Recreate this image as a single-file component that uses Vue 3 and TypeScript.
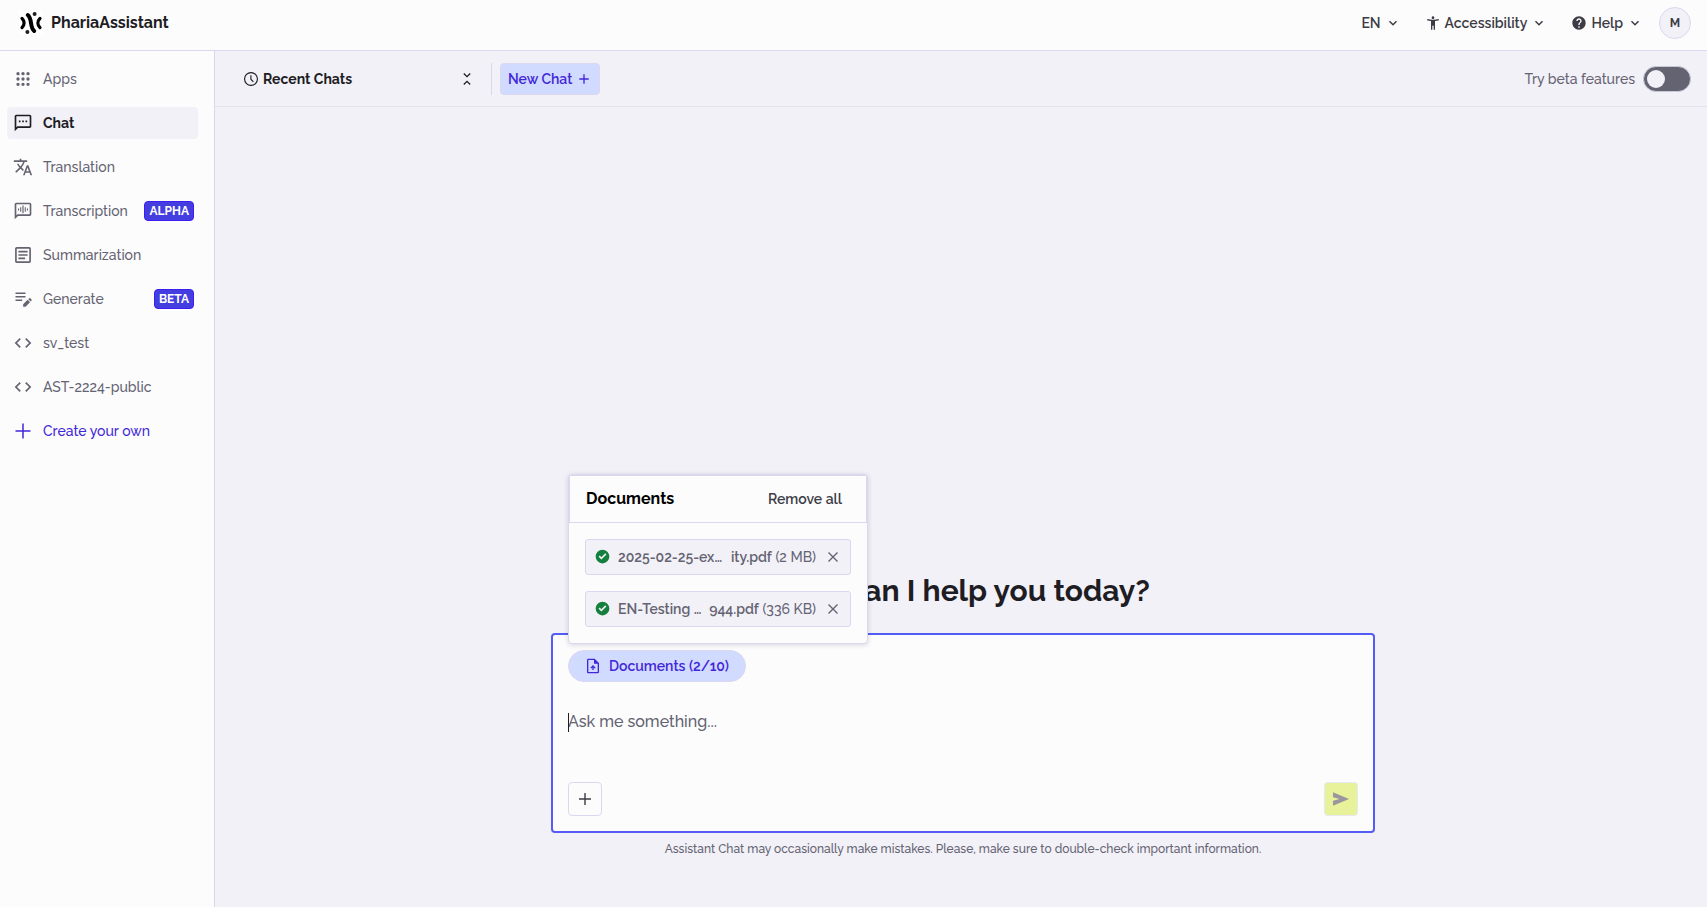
<script setup lang="ts">
import { ref } from 'vue'

interface NavItem {
  label: string
  icon: string
  badge?: string
  active?: boolean
  accent?: boolean
}

interface DocumentFile {
  head: string
  tail: string
  size: string
}

const icons: Record<string, string> = {
  apps: 'M6 3.6a2 2 0 1 0 0 4 2 2 0 0 0 0-4zm6 0a2 2 0 1 0 0 4 2 2 0 0 0 0-4zm6 0a2 2 0 1 0 0 4 2 2 0 0 0 0-4zM6 10a2 2 0 1 0 0 4 2 2 0 0 0 0-4zm6 0a2 2 0 1 0 0 4 2 2 0 0 0 0-4zm6 0a2 2 0 1 0 0 4 2 2 0 0 0 0-4zM6 16.4a2 2 0 1 0 0 4 2 2 0 0 0 0-4zm6 0a2 2 0 1 0 0 4 2 2 0 0 0 0-4zm6 0a2 2 0 1 0 0 4 2 2 0 0 0 0-4z',
  chat: 'M20 2H4c-1.1 0-2 .9-2 2v18l4-4h14c1.1 0 2-.9 2-2V4c0-1.1-.9-2-2-2zm0 14H5.2L4 17.2V4h16v12zM7 9h2v2H7zm4 0h2v2h-2zm4 0h2v2h-2z',
  translate: 'M12.87 15.07l-2.54-2.51.03-.03c1.74-1.94 2.98-4.17 3.71-6.53H17V4h-7V2H8v2H1v1.99h11.17C11.5 7.92 10.44 9.75 9 11.35 8.07 10.32 7.3 9.19 6.69 8h-2c.73 1.63 1.73 3.17 2.98 4.56l-5.09 5.02L4 19l5-5 3.11 3.11.76-2.04zM18.5 10h-2L12 22h2l1.12-3h4.75L21 22h2l-4.5-12zm-2.62 7l1.62-4.33L19.12 17h-3.24z',
  transcribe: 'M20 2H4c-1.1 0-2 .9-2 2v18l4-4h14c1.1 0 2-.9 2-2V4c0-1.1-.9-2-2-2zm0 14H5.2L4 17.2V4h16v12zM6 9h1.3v2.4H6zm2.6-1.6h1.3V13H8.6zM11.3 5.5h1.4v9.2h-1.4zM14.1 7.4h1.3V13h-1.3zM16.7 9H18v2.4h-1.3z',
  summary: 'M19.5 2.5h-15c-1.1 0-2 .9-2 2v15c0 1.1.9 2 2 2h15c1.1 0 2-.9 2-2v-15c0-1.1-.9-2-2-2zm0 17h-15v-15h15v15zM6.5 7h11v2h-11zm0 4h11v2h-11zm0 4h8v2h-8z',
  generate: 'M3 8.3h12v2H3zm0-4.2h12v2H3zm0 8.400h8v2H3zM18.400 12.200l.7-.7c.6-.6 1.500-.6 2.100 0l.7.7c.6.6.6 1.500 0 2.100l-.7.7-2.800-2.800zm-.8.800l-5.400 5.400v2.800h2.800l5.400-5.400-2.800-2.800z',
  code: 'M9.4 16.6L4.8 12l4.6-4.6L8 6l-6 6 6 6 1.4-1.4zm5.2 0l4.6-4.6-4.6-4.6L16 6l6 6-6 6-1.4-1.4z',
  add: 'M21 12.9h-8.1V21h-1.8v-8.1H3v-1.8h8.1V3h1.8v8.1H21z',
}

const navItems: NavItem[] = [
  { label: 'Apps', icon: 'apps' },
  { label: 'Chat', icon: 'chat', active: true },
  { label: 'Translation', icon: 'translate' },
  { label: 'Transcription', icon: 'transcribe', badge: 'ALPHA' },
  { label: 'Summarization', icon: 'summary' },
  { label: 'Generate', icon: 'generate', badge: 'BETA' },
  { label: 'sv_test', icon: 'code' },
  { label: 'AST-2224-public', icon: 'code' },
  { label: 'Create your own', icon: 'add', accent: true },
]

const files = ref<DocumentFile[]>([
  { head: '2025-02-25-ex…', tail: 'ity.pdf', size: '(2 MB)' },
  { head: 'EN-Testing …', tail: '944.pdf', size: '(336 KB)' },
])

const beta = ref(false)
const message = ref('')

function removeFile(index: number): void {
  files.value.splice(index, 1)
}
</script>

<template>
  <div class="app">
    <header class="topbar">
      <a class="brand" href="#">
        <svg class="logo" viewBox="0 0 24 24" aria-hidden="true">
          <g fill="none" stroke="#000" stroke-linecap="round" stroke-width="3.2">
            <path d="M3 7.400C5.800 10.200 5.800 13.800 3 16.600" />
            <path d="M21 7.400C18.200 10.200 18.200 13.800 21 16.600" />
            <path d="M8.800 4C13.600 8 10.400 16 15.200 20" stroke-width="4" />
          </g>
          <circle cx="15.600" cy="3" r="2" />
          <circle cx="8.400" cy="21" r="2" />
        </svg>
        <span>PhariaAssistant</span>
      </a>
      <div class="top-actions">
        <button class="menu-button" type="button">
          EN
          <svg class="chevron" viewBox="0 0 16 16" aria-hidden="true"><path d="M4.500 6.300 8 9.800l3.500-3.500" /></svg>
        </button>
        <button class="menu-button" type="button">
          <svg class="icon-sm" viewBox="0 0 24 24" aria-hidden="true"><path d="M20.500 6c-2.610.7-5.670 1-8.500 1s-5.890-.3-8.500-1L3 8c1.860.5 4 .83 6 1v13h2v-6h2v6h2V9c2-.17 4.140-.5 6-1l-.5-2zM12 6c1.100 0 2-.9 2-2s-.9-2-2-2-2 .9-2 2 .9 2 2 2z" /></svg>
          Accessibility
          <svg class="chevron" viewBox="0 0 16 16" aria-hidden="true"><path d="M4.500 6.300 8 9.800l3.500-3.500" /></svg>
        </button>
        <button class="menu-button" type="button">
          <svg class="icon-sm" viewBox="0 0 24 24" aria-hidden="true"><path d="M12 2C6.480 2 2 6.480 2 12s4.480 10 10 10 10-4.480 10-10S17.520 2 12 2zm1 17h-2v-2h2v2zm2.070-7.750l-.9.920C13.450 12.900 13 13.500 13 15h-2v-.5c0-1.100.450-2.100 1.170-2.830l1.240-1.260c.370-.360.590-.860.590-1.410 0-1.100-.9-2-2-2s-2 .9-2 2H8c0-2.210 1.790-4 4-4s4 1.790 4 4c0 .880-.360 1.680-.930 2.250z" /></svg>
          Help
          <svg class="chevron" viewBox="0 0 16 16" aria-hidden="true"><path d="M4.500 6.300 8 9.800l3.500-3.500" /></svg>
        </button>
        <button class="avatar" type="button">M</button>
      </div>
    </header>

    <div class="body">
      <nav class="sidebar">
        <a
          v-for="item in navItems"
          :key="item.label"
          href="#"
          class="nav-item"
          :class="{ active: item.active, accent: item.accent }"
        >
          <svg class="icon-md" viewBox="0 0 24 24" aria-hidden="true"><path :d="icons[item.icon]" /></svg>
          <span>{{ item.label }}</span>
          <span v-if="item.badge" class="badge">{{ item.badge }}</span>
        </a>
      </nav>

      <main class="main">
        <div class="toolbar">
          <button class="recent" type="button">
            <svg class="icon-sm" viewBox="0 0 24 24" aria-hidden="true"><path d="M12 1.500a10.500 10.500 0 1 0 0 21 10.500 10.500 0 0 0 0-21zm0 19.300a8.800 8.800 0 1 1 0-17.600 8.800 8.800 0 0 1 0 17.600zM12.700 6.500H11v6.300l4 4 1.200-1.200-3.500-3.500z" /></svg>
            <span>Recent Chats</span>
            <svg class="fold" viewBox="0 0 24 24" aria-hidden="true"><path d="M6.500 19.600 7.800 21 12 16.800l4.200 4.200 1.300-1.400L12 14.100zM17.500 4.400 16.200 3 12 7.200 7.800 3 6.500 4.400 12 9.900z" /></svg>
          </button>
          <span class="divider"></span>
          <button class="new-chat" type="button">
            New Chat
            <svg class="icon-sm" viewBox="0 0 24 24" aria-hidden="true"><path d="M19 13h-6v6h-2v-6H5v-2h6V5h2v6h6z" /></svg>
          </button>
          <label class="beta">
            Try beta features
            <input v-model="beta" type="checkbox" role="switch" class="switch" />
          </label>
        </div>

        <section class="stage">
          <h1>How can I help you today?</h1>
          <form class="composer" @submit.prevent>
            <div class="popover">
              <div class="popover-head">
                <h2>Documents</h2>
                <button type="button" class="remove-all" @click="files = []">Remove all</button>
              </div>
              <ul class="files">
                <li v-for="(file, index) in files" :key="file.tail" class="file">
                  <svg class="check" viewBox="0 0 24 24" aria-hidden="true"><path d="M12 1a11 11 0 1 0 0 22 11 11 0 0 0 0-22zm-1.800 15.800-4.500-4.500 1.900-1.900 2.600 2.600 6.200-6.200 1.900 1.900z" /></svg>
                  <span class="name">{{ file.head }}</span>
                  <span class="tail"><b>{{ file.tail }}</b> {{ file.size }}</span>
                  <button type="button" class="close" aria-label="Remove document" @click="removeFile(index)">
                    <svg viewBox="0 0 16 16" aria-hidden="true"><path d="m3.500 3.500 9 9m0-9-9 9" /></svg>
                  </button>
                </li>
              </ul>
            </div>
            <button type="button" class="pill">
              <svg class="icon-sm" viewBox="0 0 24 24" aria-hidden="true"><path d="M14.500 1H5c-1.100 0-2 .9-2 2v18c0 1.100.9 2 2 2h14c1.100 0 2-.9 2-2V7.500zM19 21H5V3h8.500v5.500H19zM8 14.500l1.400 1.400 1.600-1.600V18h2v-3.700l1.600 1.600 1.400-1.400-4-4z" /></svg>
              Documents (2/10)
            </button>
            <div class="prompt">
              <textarea v-model="message" rows="2" aria-label="Message" placeholder="Ask me something..."></textarea>
            </div>
            <div class="composer-actions">
              <button type="button" class="square" aria-label="Add">
                <svg viewBox="0 0 16 16" aria-hidden="true"><path d="M8 2v12M2 8h12" /></svg>
              </button>
              <button type="submit" class="square send" aria-label="Send">
                <svg viewBox="0 0 16 16" aria-hidden="true"><path d="M0 1.200 16 8 0 14.800V9.800L6.500 8 0 6.200z" /></svg>
              </button>
            </div>
          </form>
          <p class="note">Assistant Chat may occasionally make mistakes. Please, make sure to double-check important information.</p>
        </section>
      </main>
    </div>
  </div>
</template>

<style>
body {
  margin: 0;
}
</style>

<style scoped>
.app {
  display: flex;
  flex-direction: column;
  min-height: 100vh;
  background: #f2f1f8;
  color: #1e1d24;
  font-family: Raleway, "Open Sans", sans-serif;
  font-size: 14px;
  font-weight: 500;
  line-height: 20px;
}

.app * {
  box-sizing: border-box;
}

button {
  margin: 0;
  padding: 0;
  border: 0;
  background: none;
  color: inherit;
  font: inherit;
  cursor: pointer;
}

a {
  color: inherit;
  text-decoration: none;
}

svg {
  flex: none;
  fill: currentColor;
}

.icon-sm {
  width: 16px;
  height: 16px;
}

.icon-md {
  width: 20px;
  height: 20px;
}

.topbar {
  display: flex;
  align-items: center;
  justify-content: space-between;
  height: 51px;
  padding: 0 16px 4px 19px;
  border-bottom: 1px solid #dad8ee;
  background: #fcfcfd;
}

.brand {
  display: flex;
  align-items: center;
  gap: 8px;
  font-size: 16px;
  font-weight: 700;
}

.logo {
  width: 24px;
  height: 24px;
  background: #fff;
}

.top-actions {
  display: flex;
  align-items: center;
  gap: 24px;
  color: #3d3c46;
  font-weight: 600;
}

.menu-button {
  display: flex;
  align-items: center;
  gap: 4px;
}

.chevron {
  width: 16px;
  height: 16px;
}

.chevron path {
  fill: none;
  stroke: currentColor;
  stroke-width: 1.5;
}

.avatar {
  width: 32px;
  height: 32px;
  margin-left: -8px;
  border: 1px solid #dad8ee;
  border-radius: 50%;
  background: #f2f1f8;
  font-size: 12px;
  font-weight: 700;
}

.body {
  display: flex;
  flex: 1;
}

.sidebar {
  display: flex;
  flex: none;
  flex-direction: column;
  gap: 12px;
  width: 215px;
  padding: 12px 16px 12px 7px;
  border-right: 1px solid #dad8ee;
  background: #fcfcfd;
}

.nav-item {
  display: flex;
  align-items: center;
  gap: 10px;
  height: 32px;
  padding: 0 4px 0 6px;
  border-radius: 4px;
  color: #646371;
}

.nav-item.active {
  background: #f2f1f8;
  color: #1e1d24;
  font-weight: 700;
}

.nav-item.accent {
  color: #4227d9;
}

.badge {
  height: 20px;
  margin-left: auto;
  padding: 0 4px;
  border: 1px solid #3c1ff0;
  border-radius: 4px;
  background: #443ddf;
  color: #fff;
  font-size: 12px;
  font-weight: 700;
  line-height: 18px;
}

.main {
  display: flex;
  flex: 1;
  flex-direction: column;
  min-width: 0;
}

.toolbar {
  display: flex;
  align-items: center;
  height: 56px;
  padding: 0 16px 0 28px;
  border-bottom: 1px solid #e3e2ea;
}

.recent {
  display: flex;
  align-items: center;
  gap: 4px;
  width: 232px;
  font-weight: 700;
}

.fold {
  width: 16px;
  height: 16px;
  margin-left: auto;
}

.divider {
  width: 1px;
  height: 32px;
  margin: 0 8px 0 16px;
  background: #dad8ee;
}

.new-chat {
  display: flex;
  align-items: center;
  gap: 4px;
  height: 32px;
  padding: 0 7px;
  border: 1px solid #dad8ee;
  border-radius: 4px;
  background: #d1daff;
  color: #4227d9;
  font-weight: 600;
}

.beta {
  display: flex;
  align-items: center;
  gap: 8px;
  margin-left: auto;
  color: #646371;
}

.switch {
  display: flex;
  align-items: center;
  width: 48px;
  height: 26px;
  margin: 0;
  padding: 0 3px;
  border: 1px solid #c9c8d8;
  border-radius: 13px;
  background: #646371;
  appearance: none;
}

.switch::before {
  width: 18px;
  height: 18px;
  border-radius: 50%;
  background: #f2f1f8;
  content: "";
}

.switch:checked {
  justify-content: flex-end;
}

.stage {
  display: flex;
  flex: 1;
  flex-direction: column;
  align-items: center;
  justify-content: flex-end;
  padding: 0 16px 48px 20px;
}

h1 {
  margin: 0 0 24px;
  font-size: 30px;
  font-weight: 700;
  line-height: 36px;
}

.composer {
  position: relative;
  width: 100%;
  max-width: 824px;
  padding: 15px;
  border: 2px solid #535cf5;
  border-radius: 4px;
  background: #fcfcfd;
}

.popover {
  position: absolute;
  bottom: 187px;
  left: 15px;
  width: 300px;
  border: 1px solid #dad8ee;
  border-radius: 4px;
  background: #fcfcfd;
  box-shadow: 0 1px 5px rgb(60 55 100 / 20%);
}

.popover-head {
  display: flex;
  align-items: center;
  justify-content: space-between;
  height: 48px;
  padding: 0 24px 0 16px;
  border: 1px solid #dad8ee;
}

h2 {
  margin: 0;
  color: #000;
  font-size: 16px;
  font-weight: 700;
}

.remove-all {
  color: #3d3c46;
  font-weight: 600;
}

.files {
  display: flex;
  flex-direction: column;
  gap: 16px;
  margin: 0;
  padding: 16px;
  list-style: none;
}

.file {
  display: flex;
  align-items: center;
  height: 36px;
  padding: 0 9px 1px;
  border: 1px solid #dad8ee;
  border-radius: 3px;
  background: #f2f1f8;
  color: #646371;
  white-space: nowrap;
}

.check {
  width: 15px;
  height: 15px;
  color: #15803d;
}

.name {
  margin-left: 8px;
  font-weight: 600;
}

.tail {
  margin-left: auto;
}

.tail b {
  font-weight: 600;
}

.close {
  display: flex;
  margin-left: 9px;
}

.close svg,
.square svg {
  width: 16px;
  height: 16px;
}

.close path,
.square path {
  stroke: currentColor;
  stroke-width: 1.4;
}

.pill {
  display: flex;
  align-items: center;
  gap: 8px;
  height: 32px;
  padding: 0 16px;
  border: 1px solid #dad8ee;
  border-radius: 16px;
  background: #d1daff;
  color: #4227d9;
  font-weight: 600;
}

.prompt {
  position: relative;
  padding: 28px 0 24px;
}

.prompt::before {
  position: absolute;
  top: 31px;
  left: 0;
  width: 1px;
  height: 19px;
  background: #1e1d24;
  content: "";
}

textarea {
  display: block;
  width: 100%;
  margin: 0;
  padding: 0;
  border: 0;
  outline: 0;
  background: transparent;
  color: #1e1d24;
  font: inherit;
  font-size: 16px;
  line-height: 24px;
  resize: none;
}

textarea::placeholder {
  color: #646371;
  opacity: 1;
}

.composer-actions {
  display: flex;
  justify-content: space-between;
}

.square {
  display: flex;
  align-items: center;
  justify-content: center;
  width: 34px;
  height: 34px;
  border: 1px solid #dad8ee;
  border-radius: 4px;
  color: #3d3c46;
}

.send {
  border-color: #e8e8f2;
  background: #e7f29b;
  color: #99969d;
}

.send path {
  stroke: none;
}

.note {
  margin: 6px 0 0;
  color: #646371;
  font-size: 12px;
  line-height: 20px;
}
</style>
